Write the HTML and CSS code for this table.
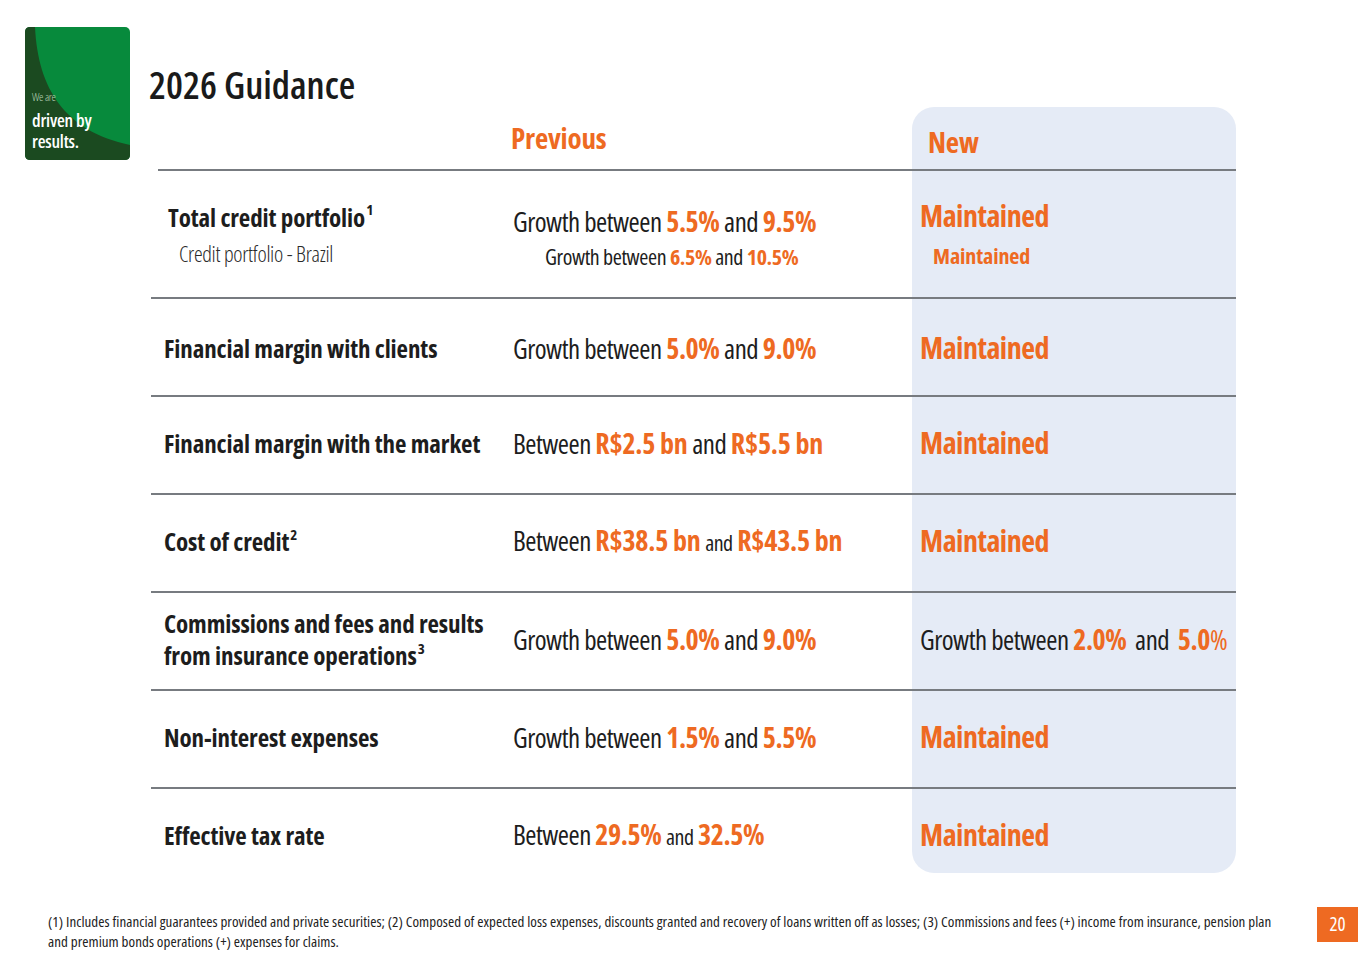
FILE: index.html
```html
<!DOCTYPE html>
<html lang="en">
<head>
<meta charset="utf-8">
<title>2026 Guidance</title>
<link rel="stylesheet" href="styles.css">
</head>
<body>
<div class="slide">
  <div class="top">
    <div class="logo">
      <svg width="105" height="133" viewBox="0 0 105 133" aria-label="We are driven by results.">
        <rect x="0" y="0" width="105" height="133" rx="5" fill="#078a3c"/>
        <path d="M5 0 H10 C13 62 40 104 105 118 V128 Q105 133 100 133 H5 Q0 133 0 128 V5 Q0 0 5 0 Z" fill="#1b4a20"/>
        <text x="7" y="74" class="logo-small">We are</text>
        <text x="7" y="100" class="logo-big">driven by</text>
        <text x="7" y="121" class="logo-big">results.</text>
      </svg>
    </div>
    <div class="main">
      <h1 class="title">2026 Guidance</h1>
      <div class="table">
        <div class="head">
          <div class="hcell"></div>
          <div class="hcell hprev">Previous</div>
          <div class="hcell hnew">New</div>
        </div>

        <div class="row row-first">
          <div class="lbl">
            <div class="lbl-main">Total credit portfolio<sup>1</sup></div>
            <div class="lbl-sub">Credit portfolio - Brazil</div>
          </div>
          <div class="val">
            <div class="v">Growth between <b>5.5%</b> and <b>9.5%</b></div>
            <div class="v-sub">Growth between <b>6.5%</b> and <b>10.5%</b></div>
          </div>
          <div class="nw">
            <div class="m">Maintained</div>
            <div class="m-sub">Maintained</div>
          </div>
        </div>

        <div class="row row-2">
          <div class="lbl"><div class="lbl-main">Financial margin with clients</div></div>
          <div class="val"><div class="v">Growth between <b>5.0%</b> and <b>9.0%</b></div></div>
          <div class="nw"><div class="m">Maintained</div></div>
        </div>

        <div class="row">
          <div class="lbl"><div class="lbl-main">Financial margin with the market</div></div>
          <div class="val"><div class="v">Between <b class="money">R$2.5 bn</b> and <b class="money">R$5.5 bn</b></div></div>
          <div class="nw"><div class="m">Maintained</div></div>
        </div>

        <div class="row">
          <div class="lbl"><div class="lbl-main">Cost of credit<sup>2</sup></div></div>
          <div class="val"><div class="v">Between <b class="money">R$38.5 bn</b> <span class="small">and</span> <b class="money">R$43.5 bn</b></div></div>
          <div class="nw"><div class="m">Maintained</div></div>
        </div>

        <div class="row">
          <div class="lbl"><div class="lbl-main">Commissions and fees and results<br>from insurance operations<sup>3</sup></div></div>
          <div class="val"><div class="v">Growth between <b>5.0%</b> and <b>9.0%</b></div></div>
          <div class="nw"><div class="v v-new">Growth between <b>2.0%</b> <span class="wide">and</span> <b>5.0</b><span class="pct">%</span></div></div>
        </div>

        <div class="row">
          <div class="lbl"><div class="lbl-main">Non-interest expenses</div></div>
          <div class="val"><div class="v">Growth between <b>1.5%</b> and <b>5.5%</b></div></div>
          <div class="nw"><div class="m">Maintained</div></div>
        </div>

        <div class="row row-last">
          <div class="lbl"><div class="lbl-main">Effective tax rate</div></div>
          <div class="val"><div class="v">Between <b>29.5%</b> <span class="small">and</span> <b>32.5%</b></div></div>
          <div class="nw"><div class="m">Maintained</div></div>
        </div>
      </div>
    </div>
  </div>

  <div class="footer">
    <p class="notes">(1) Includes financial guarantees provided and private securities; (2) Composed of expected loss expenses, discounts granted and recovery of loans written off as losses; (3) Commissions and fees (+) income from insurance, pension plan and premium bonds operations (+) expenses for claims.</p>
    <div class="page">20</div>
  </div>
</div>
</body>
</html>
```

FILE: styles.css
```css
* { box-sizing: border-box; }
html, body { margin: 0; padding: 0; background: #fff; }
body {
  font-family: "Open Sans", "Noto Sans", "DejaVu Sans", sans-serif;
  font-stretch: 80%;
  color: #1d1d1d;
  width: 1365px;
  height: 965px;
  overflow: hidden;
}
.slide { width: 1365px; height: 965px; }

.top { display: flex; padding: 27px 0 0 25px; }
.logo { width: 105px; height: 133px; flex: none; }
.logo svg { display: block; }
.logo-small { font-family: "Open Sans", sans-serif; font-stretch: 80%; font-size: 11px; font-weight: 300; fill: #b9d3b8; letter-spacing: -0.3px; }
.logo-big { font-family: "Open Sans", sans-serif; font-stretch: 84%; font-size: 18px; font-weight: 600; fill: #fff; letter-spacing: -0.2px; }

.main { margin-left: 19px; width: 1092px; }
.title {
  margin: 34px 0 0;
  height: 46px;
  font-size: 38px;
  line-height: 46px;
  font-weight: 600;
  font-stretch: 79%;
  letter-spacing: 0;
  color: #1a1a1a;
}

.table { margin-left: 2px; width: 1085px; }
.head {
  display: grid;
  grid-template-columns: 355px 399px 324px;
  margin-left: 7px;
  height: 64px;
  border-bottom: 2px solid #777b80;
}
.hcell { font-size: 29px; font-weight: 700; color: #ee6a22; line-height: 36px; font-stretch: 79%; letter-spacing: -0.2px; }
.hprev { padding-top: 13px; margin-left: -2px; }
.hnew { padding-top: 17px; padding-left: 16px; background: #e5ebf6; border-radius: 22px 22px 0 0; }

.row {
  display: grid;
  grid-template-columns: 362px 399px 324px;
  height: 98px;
  border-bottom: 2px solid #777b80;
}
.row-first { height: 128px; }
.row-last { height: 84px; border-bottom: none; }
.row-last .nw { border-radius: 0 0 22px 22px; }

.lbl, .val, .nw { display: flex; flex-direction: column; justify-content: center; }
.lbl { padding-left: 13px; padding-bottom: 4px; }
.lbl-main { font-size: 25px; font-weight: 700; line-height: 32px; font-stretch: 83%; letter-spacing: -0.1px; color: #1d1d1d; }
.lbl-sub { font-size: 22px; font-weight: 300; line-height: 38px; padding-left: 15px; font-stretch: 85%; letter-spacing: -0.3px; color: #2a2a2a; }
.row-first .lbl-main { padding-left: 4px; }
sup { font-size: 0.6em; line-height: 0; vertical-align: 0.75em; margin-left: 1px; }

.val { padding-bottom: 4px; }
.v { font-size: 27px; line-height: 34px; font-stretch: 81%; letter-spacing: -0.5px; color: #1d1d1d; white-space: nowrap; }
.v b { color: #ee6a22; font-weight: 700; font-size: 28px; font-stretch: 77%; letter-spacing: -0.4px; }
.v b.money { font-stretch: 81%; letter-spacing: -0.2px; }
.v .small { font-size: 22px; }
.v .wide { padding: 0 4px; }
.v .pct { color: #ee6a22; font-weight: 400; }
.v-sub { font-size: 22px; line-height: 34px; font-stretch: 80%; letter-spacing: -0.4px; padding-left: 32px; white-space: nowrap; }
.v-sub b { color: #ee6a22; font-weight: 700; font-stretch: 77%; }
.row-first .lbl, .row-first .nw { padding-bottom: 0; padding-top: 5px; }
.row-first .val { padding-bottom: 0; padding-top: 8px; }
.row-first .lbl-sub { line-height: 40px; }
.row-2 .lbl, .row-2 .val, .row-2 .nw { padding-bottom: 0; padding-top: 2px; }
.row-last .lbl, .row-last .val, .row-last .nw { padding-bottom: 0; padding-top: 8px; }

.nw { background: #e5ebf6; padding-left: 8px; padding-bottom: 4px; }
.m { font-size: 30px; font-weight: 700; color: #ee6a22; line-height: 36px; font-stretch: 77%; letter-spacing: -0.5px; }
.m-sub { font-size: 22px; font-weight: 700; color: #ee6a22; line-height: 42px; padding-left: 13px; font-stretch: 78%; letter-spacing: -0.1px; }

.footer { display: flex; align-items: flex-start; margin-top: 34px; padding-left: 48px; }
.notes {
  margin: 4px 0 0;
  width: 1235px;
  font-size: 15px;
  line-height: 20px;
  font-stretch: 80%;
  letter-spacing: 0.05px;
  color: #222;
}
.page {
  margin-left: 34px;
  width: 41px;
  height: 35px;
  background: #ee6a22;
  color: #fff;
  font-size: 19px;
  line-height: 35px;
  text-align: center;
}
```
